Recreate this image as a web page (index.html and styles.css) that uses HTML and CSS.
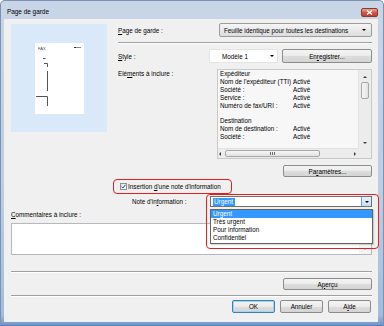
FILE: index.html
```html
<!DOCTYPE html>
<html>
<head>
    <title>Page de garde</title>
    <link rel="stylesheet" href="styles.css">
</head>
<body>
    <div class="window">
        <div class="titlebar">
            <span class="title">Page de garde</span>
            <span class="close">
                <svg width="7" height="5" viewBox="0 0 7 5"><path d="M1 0.5 L6 4.5 M6 0.5 L1 4.5" stroke="#fff" stroke-width="1.3"/></svg>
            </span>
        </div>

        <div class="client">
            <div class="top">
                <div class="preview">
                    <div class="sheet">
                        <svg width="49" height="71" viewBox="0 0 49 71">
                            <text x="3" y="7" font-size="4" font-family="Liberation Sans, sans-serif" fill="#444">FAX</text>
                            <path d="M39 4.5 H46" stroke="#888" stroke-width="1"/>
                            <path d="M39 4.5 H41" stroke="#333" stroke-width="1"/>
                            <path d="M8 15.5 H10.5" stroke="#555" stroke-width="1"/>
                            <path d="M9 20.5 H12.5 V24" stroke="#555" stroke-width="1" fill="none"/>
                            <path d="M12.5 28 V48" stroke="#555" stroke-width="1"/>
                            <path d="M1 53.5 H12.5 V63" stroke="#555" stroke-width="1" fill="none"/>
                        </svg>
                    </div>
                </div>

                <div class="form">
                    <div class="row row-page">
                        <span class="label label-page"><u>P</u>age de garde :</span>
                        <div class="combo combo-page">
                            <span>Feuille identique pour toutes les destinations</span>
                            <span class="arrow"></span>
                        </div>
                    </div>

                    <div class="sep"></div>

                    <div class="row row-style">
                        <span class="label label-style"><u>S</u>tyle :</span>
                        <div class="combo combo-style">
                            <span>Modèle 1</span>
                            <span class="arrow"></span>
                        </div>
                        <button class="btn btn-save">En<u>r</u>egistrer...</button>
                    </div>

                    <div class="row row-elements">
                        <span class="label label-elements">Elé<u>m</u>ents à inclure :</span>
                        <div class="listbox">
                            <div class="list-content">
                                <div class="item">Expéditeur</div>
                                <div class="item"><span class="key">Nom de l'expéditeur (TTI) :</span><span>Activé</span></div>
                                <div class="item"><span class="key">Société :</span><span>Activé</span></div>
                                <div class="item"><span class="key">Service :</span><span>Activé</span></div>
                                <div class="item"><span class="key">Numéro de fax/URI :</span><span>Activé</span></div>
                                <div class="gap"></div>
                                <div class="item">Destination</div>
                                <div class="item"><span class="key">Nom de destination :</span><span>Activé</span></div>
                                <div class="item"><span class="key">Société :</span><span>Activé</span></div>
                            </div>
                            <div class="vscroll">
                                <span class="tri tri-up"></span>
                                <span class="vthumb"></span>
                                <span class="tri tri-down"></span>
                            </div>
                            <div class="hscroll">
                                <span class="tri tri-left"></span>
                                <span class="hthumb"><span class="grip"></span></span>
                                <span class="tri tri-right"></span>
                            </div>
                            <div class="corner"></div>
                        </div>
                    </div>

                    <div class="row row-params">
                        <button class="btn btn-params">Pa<u>r</u>amètres...</button>
                    </div>

                    <div class="row row-check">
                        <span class="checkbox">
                            <svg width="5" height="5" viewBox="0 0 5 5"><path d="M0.6 2.6 L2 4 L4.4 0.8" stroke="#2a4f9c" stroke-width="1" fill="none"/></svg>
                        </span>
                        <span>Insertion <u>d</u>'une note d'information</span>
                    </div>

                    <div class="row row-note">
                        <span class="label label-note">Note d'in<u>f</u>ormation :</span>
                        <div class="combo combo-note">
                            <span class="selected">Urgent</span>
                            <span class="drop-btn"><span class="arrow"></span></span>
                        </div>
                    </div>
                </div>
            </div>

            <div class="comments-label"><u>C</u>ommentaires à inclure :</div>
            <div class="textbox">
                <div class="tb-scroll"><span class="tri tri-down tri-light"></span></div>
            </div>

            <div class="sep sep-wide"></div>

            <div class="row row-apercu">
                <button class="btn btn-apercu">A<u>p</u>erçu</button>
            </div>

            <div class="sep sep-wide sep-bottom"></div>

            <div class="row footer">
                <button class="btn btn-ok">OK</button>
                <button class="btn">Annuler</button>
                <button class="btn">A<u>i</u>de</button>
            </div>
        </div>

        <div class="dropdown">
            <div class="opt opt-active">Urgent</div>
            <div class="opt">Très urgent</div>
            <div class="opt">Pour information</div>
            <div class="opt">Confidentiel</div>
        </div>

        <div class="mark mark-check"></div>
        <div class="mark mark-note"></div>
    </div>
</body>
</html>
```

FILE: styles.css
```css
body {
    margin: 0;
    width: 384px;
    height: 326px;
    overflow: hidden;
    background: #fff;
    font-family: "Liberation Sans", Arial, sans-serif;
    font-size: 6.3px;
    color: #000;
}
u {
    text-decoration-thickness: 0.5px;
    text-underline-offset: 1px;
}
.window {
    position: relative;
    width: 384px;
    height: 326px;
    box-sizing: border-box;
    border: 1px solid #7b93b0;
    border-bottom-color: #5a80b0;
    border-radius: 5px 5px 0 0;
    background: linear-gradient(#c8d6e7, #bccde2 60%, #a3bcdb 97%, #6f97c8);
    display: flex;
    flex-direction: column;
}
.titlebar {
    height: 18px;
    display: flex;
    align-items: center;
    justify-content: space-between;
    padding: 2px 5px 0 6px;
    box-sizing: border-box;
}
.title {
    font-size: 6.4px;
}
.close {
    width: 17px;
    height: 9px;
    margin-top: 2px;
    box-sizing: border-box;
    border: 1px solid #8a3a2f;
    border-radius: 2px;
    background: linear-gradient(#e9a597, #d15b47 50%, #c0402c);
    display: flex;
    align-items: center;
    justify-content: center;
}
.client {
    flex: 1;
    margin: 0 5px 3px 3px;
    padding: 4px 6px 0 7px;
    background: #f0f0f0;
    display: flex;
    flex-direction: column;
}
.top {
    display: flex;
    align-items: flex-start;
}
.preview {
    width: 96px;
    height: 108px;
    margin-top: 1px;
    background: #dae9fa;
    display: flex;
    align-items: center;
    justify-content: center;
}
.sheet {
    width: 49px;
    height: 71px;
    background: #fff;
}
.sheet svg {
    display: block;
}
.form {
    margin-left: 11px;
    width: 254px;
}
.row {
    display: flex;
    align-items: center;
}
.label {
    flex-shrink: 0;
}
.row-page {
    height: 14px;
}
.label-page {
    width: 101px;
}
.combo {
    position: relative;
    box-sizing: border-box;
    display: flex;
    align-items: center;
}
.combo-page {
    width: 153px;
    height: 14px;
    padding-left: 4px;
    border: 1px solid #9c9c9c;
    border-radius: 2px;
    background: linear-gradient(#f6f6f6, #e9e9e9 50%, #dcdcdc);
}
.arrow {
    position: absolute;
    right: 5px;
    top: 50%;
    margin-top: -1px;
    width: 0;
    height: 0;
    border-left: 2px solid transparent;
    border-right: 2px solid transparent;
    border-top: 2.5px solid #000;
}
.sep {
    height: 0;
    border-top: 1px solid #a0a0a0;
    border-bottom: 1px solid #fff;
    margin: 5px 0 5px;
}
.row-style {
    height: 14px;
}
.label-style {
    width: 91px;
}
.combo-style {
    width: 69px;
    height: 14px;
    padding-left: 12px;
    background: #fff;
    border: 1px solid #e4e4e4;
}
.combo-style .arrow {
    right: 3px;
}
.btn {
    font-family: inherit;
    font-size: 6.3px;
    color: #000;
    padding: 0;
    box-sizing: border-box;
    border: 1px solid #8c8c8c;
    border-radius: 2px;
    background: linear-gradient(#f4f4f4, #ebebeb 50%, #dddddd 51%, #d4d4d4);
    display: flex;
    align-items: center;
    justify-content: center;
}
.btn-save {
    width: 90px;
    height: 14px;
    margin-left: 4px;
}
.row-elements {
    align-items: flex-start;
    margin-top: 6px;
}
.label-elements {
    width: 99px;
    padding-top: 1px;
    line-height: 8px;
}
.listbox {
    width: 155px;
    height: 90px;
    box-sizing: border-box;
    border: 1px solid #c9c9c9;
    background: #f7f7f7;
    display: grid;
    grid-template-columns: 1fr 13px;
    grid-template-rows: 1fr 10px;
}
.list-content {
    padding-left: 2px;
    overflow: hidden;
}
.item {
    line-height: 8px;
    height: 8px;
    display: flex;
    white-space: nowrap;
}
.key {
    width: 73px;
}
.gap {
    height: 7px;
}
.vscroll {
    background: #ececec;
    border-left: 1px solid #e2e2e2;
    display: flex;
    flex-direction: column;
    align-items: center;
    padding: 6px 0 4px;
}
.vthumb {
    width: 8px;
    height: 17px;
    margin-top: 4px;
    box-sizing: border-box;
    border: 1px solid #a7a7a7;
    border-radius: 2px;
    background: linear-gradient(90deg, #f6f6f6, #e2e2e2);
}
.vscroll .tri-down {
    margin-top: auto;
}
.hscroll {
    background: #ececec;
    border-top: 1px solid #e2e2e2;
    display: flex;
    align-items: center;
    padding: 0 2px 0 1px;
}
.hthumb {
    width: 95px;
    height: 7px;
    margin-left: 4px;
    box-sizing: border-box;
    border: 1px solid #a7a7a7;
    border-radius: 2px;
    background: linear-gradient(#f6f6f6, #e2e2e2);
    display: flex;
    align-items: center;
    justify-content: center;
}
.grip {
    width: 5px;
    height: 3px;
    background: repeating-linear-gradient(90deg, #6d6d6d 0 1px, transparent 1px 2px);
}
.hscroll .tri-right {
    margin-left: auto;
}
.corner {
    background: #ececec;
}
.tri {
    width: 0;
    height: 0;
    flex-shrink: 0;
}
.tri-up {
    border-left: 2px solid transparent;
    border-right: 2px solid transparent;
    border-bottom: 2px solid #3d3d3d;
}
.tri-down {
    border-left: 2px solid transparent;
    border-right: 2px solid transparent;
    border-top: 2px solid #3d3d3d;
}
.tri-left {
    border-top: 2px solid transparent;
    border-bottom: 2px solid transparent;
    border-right: 2px solid #3d3d3d;
}
.tri-right {
    border-top: 2px solid transparent;
    border-bottom: 2px solid transparent;
    border-left: 2px solid #3d3d3d;
}
.row-params {
    justify-content: flex-end;
    margin-top: 6px;
}
.btn-params {
    width: 89px;
    height: 12px;
}
.row-check {
    margin-top: 4px;
    height: 10px;
    padding-left: 2px;
}
.checkbox {
    width: 7px;
    height: 7px;
    margin-right: 1px;
    box-sizing: border-box;
    border: 1px solid #8f8f8f;
    background: linear-gradient(135deg, #e3e3e3, #fcfcfc);
    display: flex;
    align-items: center;
    justify-content: center;
}
.row-note {
    margin-top: 5px;
    height: 11px;
}
.label-note {
    width: 92px;
    padding-left: 14px;
    box-sizing: border-box;
}
.combo-note {
    width: 162px;
    height: 11px;
    padding-left: 2px;
    border: 1px solid #6f6f6f;
    background: #fff;
}
.selected {
    background: #3399ff;
    color: #fff;
    line-height: 8px;
    padding: 0 1px;
    width: 20px;
}
.drop-btn {
    position: absolute;
    right: 0;
    top: 0;
    bottom: 0;
    width: 9px;
    border-left: 1px solid #6f9ed0;
    background: linear-gradient(#e6f2fc, #c4e0f8);
}
.drop-btn .arrow {
    right: 2px;
}
.comments-label {
    margin-top: 4px;
    line-height: 8px;
}
.textbox {
    margin-top: 4px;
    height: 32px;
    box-sizing: border-box;
    border: 1px solid #b4b8bf;
    background: #fff;
    display: flex;
    justify-content: flex-end;
}
.tb-scroll {
    width: 12px;
    background: #f4f4f4;
    display: flex;
    align-items: flex-end;
    justify-content: center;
    padding-bottom: 4px;
    box-sizing: border-box;
}
.tri-light {
    border-top-color: #9a9a9a;
}
.sep-wide {
    margin-top: 16px;
}
.row-apercu {
    justify-content: flex-end;
}
.btn-apercu {
    width: 89px;
    height: 12px;
}
.sep-bottom {
    margin-top: 5px;
    margin-bottom: 3px;
}
.footer {
    justify-content: flex-end;
    gap: 5px;
    padding-right: 1px;
}
.footer .btn {
    width: 43px;
    height: 13px;
}
.btn-ok {
    border-color: #3c7fb1;
    box-shadow: inset 0 0 0 1px #9fd5f5;
}
.dropdown {
    position: absolute;
    left: 209px;
    top: 208px;
    width: 163px;
    box-sizing: border-box;
    border: 1px solid #646464;
    background: #fff;
    padding: 0 0 1px;
    box-shadow: 1px 1px 1px rgba(0, 0, 0, 0.15);
}
.opt {
    height: 8px;
    line-height: 8px;
    padding-left: 2px;
}
.opt-active {
    background: #3399ff;
    color: #fff;
}
.mark {
    position: absolute;
    box-sizing: border-box;
    border: 1.5px solid #e21e1e;
    border-radius: 4px;
}
.mark-check {
    left: 112px;
    top: 178px;
    width: 119px;
    height: 15px;
}
.mark-note {
    left: 205px;
    top: 193px;
    width: 173px;
    height: 55px;
}
```
